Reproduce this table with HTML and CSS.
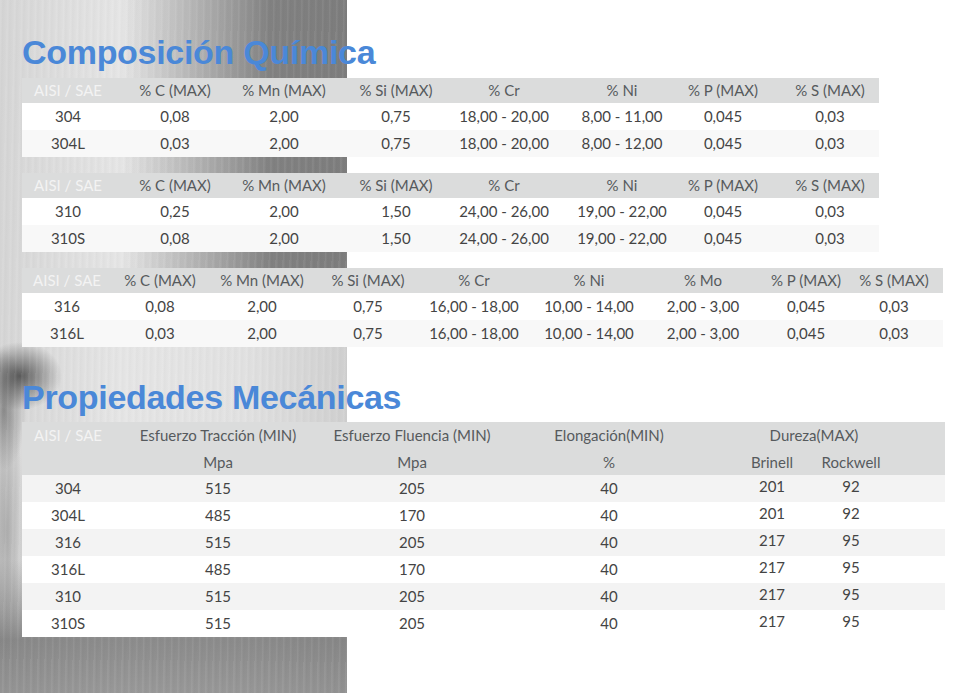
FILE: index.html
```html
<!DOCTYPE html>
<html lang="es">
<head>
<meta charset="utf-8">
<title>Composición Química</title>
<link rel="stylesheet" href="styles.css">
</head>
<body>
<div class="page">
  <h1 class="title">Composición Química</h1>

  <div class="tbl t8">
    <div class="row head">
      <span class="c aisi">AISI / SAE</span><span class="c">% C (MAX)</span><span class="c">% Mn (MAX)</span><span class="c">% Si (MAX)</span><span class="c">% Cr</span><span class="c">% Ni</span><span class="c">% P (MAX)</span><span class="c">% S (MAX)</span>
    </div>
    <div class="row">
      <span class="c">304</span><span class="c">0,08</span><span class="c">2,00</span><span class="c">0,75</span><span class="c">18,00 - 20,00</span><span class="c">8,00 - 11,00</span><span class="c">0,045</span><span class="c">0,03</span>
    </div>
    <div class="row alt">
      <span class="c">304L</span><span class="c">0,03</span><span class="c">2,00</span><span class="c">0,75</span><span class="c">18,00 - 20,00</span><span class="c">8,00 - 12,00</span><span class="c">0,045</span><span class="c">0,03</span>
    </div>
  </div>

  <div class="tbl t8">
    <div class="row head">
      <span class="c aisi">AISI / SAE</span><span class="c">% C (MAX)</span><span class="c">% Mn (MAX)</span><span class="c">% Si (MAX)</span><span class="c">% Cr</span><span class="c">% Ni</span><span class="c">% P (MAX)</span><span class="c">% S (MAX)</span>
    </div>
    <div class="row">
      <span class="c">310</span><span class="c">0,25</span><span class="c">2,00</span><span class="c">1,50</span><span class="c">24,00 - 26,00</span><span class="c">19,00 - 22,00</span><span class="c">0,045</span><span class="c">0,03</span>
    </div>
    <div class="row alt">
      <span class="c">310S</span><span class="c">0,08</span><span class="c">2,00</span><span class="c">1,50</span><span class="c">24,00 - 26,00</span><span class="c">19,00 - 22,00</span><span class="c">0,045</span><span class="c">0,03</span>
    </div>
  </div>

  <div class="tbl t9">
    <div class="row head">
      <span class="c aisi">AISI / SAE</span><span class="c">% C (MAX)</span><span class="c">% Mn (MAX)</span><span class="c">% Si (MAX)</span><span class="c">% Cr</span><span class="c">% Ni</span><span class="c">% Mo</span><span class="c">% P (MAX)</span><span class="c">% S (MAX)</span>
    </div>
    <div class="row">
      <span class="c">316</span><span class="c">0,08</span><span class="c">2,00</span><span class="c">0,75</span><span class="c">16,00 - 18,00</span><span class="c">10,00 - 14,00</span><span class="c">2,00 - 3,00</span><span class="c">0,045</span><span class="c">0,03</span>
    </div>
    <div class="row alt">
      <span class="c">316L</span><span class="c">0,03</span><span class="c">2,00</span><span class="c">0,75</span><span class="c">16,00 - 18,00</span><span class="c">10,00 - 14,00</span><span class="c">2,00 - 3,00</span><span class="c">0,045</span><span class="c">0,03</span>
    </div>
  </div>

  <h1 class="title title2">Propiedades Mecánicas</h1>

  <div class="tbl tmec">
    <div class="head">
      <div class="row hrow1">
        <span class="c aisi">AISI / SAE</span><span class="c">Esfuerzo Tracción (MIN)</span><span class="c">Esfuerzo Fluencia (MIN)</span><span class="c">Elongación(MIN)</span><span class="c dureza">Dureza(MAX)</span>
      </div>
      <div class="row hrow2">
        <span class="c"></span><span class="c">Mpa</span><span class="c">Mpa</span><span class="c">%</span><span class="c">Brinell</span><span class="c">Rockwell</span>
      </div>
    </div>
    <div class="row alt2">
      <span class="c">304</span><span class="c">515</span><span class="c">205</span><span class="c">40</span><span class="c hi">201</span><span class="c hi">92</span>
    </div>
    <div class="row">
      <span class="c">304L</span><span class="c">485</span><span class="c">170</span><span class="c">40</span><span class="c hi">201</span><span class="c hi">92</span>
    </div>
    <div class="row alt2">
      <span class="c">316</span><span class="c">515</span><span class="c">205</span><span class="c">40</span><span class="c hi">217</span><span class="c hi">95</span>
    </div>
    <div class="row">
      <span class="c">316L</span><span class="c">485</span><span class="c">170</span><span class="c">40</span><span class="c hi">217</span><span class="c hi">95</span>
    </div>
    <div class="row alt2">
      <span class="c">310</span><span class="c">515</span><span class="c">205</span><span class="c">40</span><span class="c hi">217</span><span class="c hi">95</span>
    </div>
    <div class="row">
      <span class="c">310S</span><span class="c">515</span><span class="c">205</span><span class="c">40</span><span class="c hi">217</span><span class="c hi">95</span>
    </div>
  </div>
</div>
</body>
</html>
```

FILE: styles.css
```css
html, body {
  margin: 0;
  padding: 0;
  background: #ffffff;
}

.page {
  width: 960px;
  height: 693px;
  overflow: hidden;
  box-sizing: border-box;
  padding: 32px 0 0 22px;
  font-family: Lato, "Liberation Sans", Arial, sans-serif;
  background-color: #ffffff;
  background-image:
    repeating-linear-gradient(91deg, rgba(255,255,255,0.06) 0px, rgba(255,255,255,0.06) 1px, rgba(0,0,0,0.018) 3px, rgba(0,0,0,0) 7px),
    radial-gradient(ellipse 42px 34px at 20px 376px, rgba(60,60,60,0.8), rgba(60,60,60,0) 100%),
    radial-gradient(ellipse 22px 60px at 4px 410px, rgba(80,80,80,0.55), rgba(80,80,80,0) 100%),
    radial-gradient(ellipse 18px 130px at 6px 530px, rgba(120,120,120,0.45), rgba(120,120,120,0) 100%),
    linear-gradient(180deg, rgba(110,110,110,0) 0px, rgba(110,110,110,0) 560px, rgba(110,110,110,0.75) 640px, rgba(120,120,120,0.7) 693px),
    linear-gradient(90deg, rgba(80,80,80,0) 0%, rgba(80,80,80,0) 35%, rgba(80,80,80,0.65) 78%, rgba(90,90,90,0.7) 100%),
    linear-gradient(90deg, #d6d6d6 0%, #e6e6e6 35%, #e2e2e2 70%, #d0d0d0 100%);
  background-size:
    347px 693px,
    347px 693px,
    347px 693px,
    347px 693px,
    347px 693px,
    347px 275px,
    347px 693px;
  background-position: 0 0;
  background-repeat: no-repeat;
}

.title {
  margin: 0;
  height: 40px;
  font-family: "Liberation Sans", Arial, Helvetica, sans-serif;
  font-weight: 700;
  font-size: 34px;
  line-height: 40px;
  letter-spacing: -0.3px;
  color: #4a88d8;
  white-space: nowrap;
}

.title2 {
  margin-top: 30px;
}

.tbl {
  margin-top: 16px;
  font-size: 15px;
  color: #444444;
}

.title + .tbl {
  margin-top: 6px;
}

.title2 + .tbl {
  margin-top: 5px;
}

.row {
  display: grid;
  height: 27px;
  background: #ffffff;
}

.row.head,
.tbl .head {
  background: #dbdcdc;
  color: #565a5d;
}

.row.head {
  height: 25px;
}

.row.alt {
  background: #f8f8f8;
}

.row.alt2 {
  background: #f3f3f3;
}

.c {
  display: flex;
  justify-content: center;
  align-items: center;
  white-space: nowrap;
  line-height: 1;
}

.c.aisi {
  color: #f3f3f3;
}

/* Composición: 8 columns */
.t8 .row {
  width: 857px;
  grid-template-columns: 92px 122px 96px 128px 88px 148px 54px 160px;
}

/* Composición: 9 columns */
.t9 .row {
  width: 921px;
  grid-template-columns: 90px 96px 108px 104px 108px 122px 106px 100px 76px;
}

/* Propiedades mecánicas */
.tmec .head {
  width: 923px;
}

.tmec .row {
  width: 923px;
  grid-template-columns: 92px 208px 180px 214px 112px 46px;
}

.tmec .head .row {
  background: transparent;
}

.tmec .hrow1 {
  height: 27px;
}

.tmec .hrow2 {
  height: 26px;
}

.c.dureza {
  grid-column: 5 / span 2;
  padding-left: 38px;
}

.c.hi {
  padding-bottom: 4px;
}
```
